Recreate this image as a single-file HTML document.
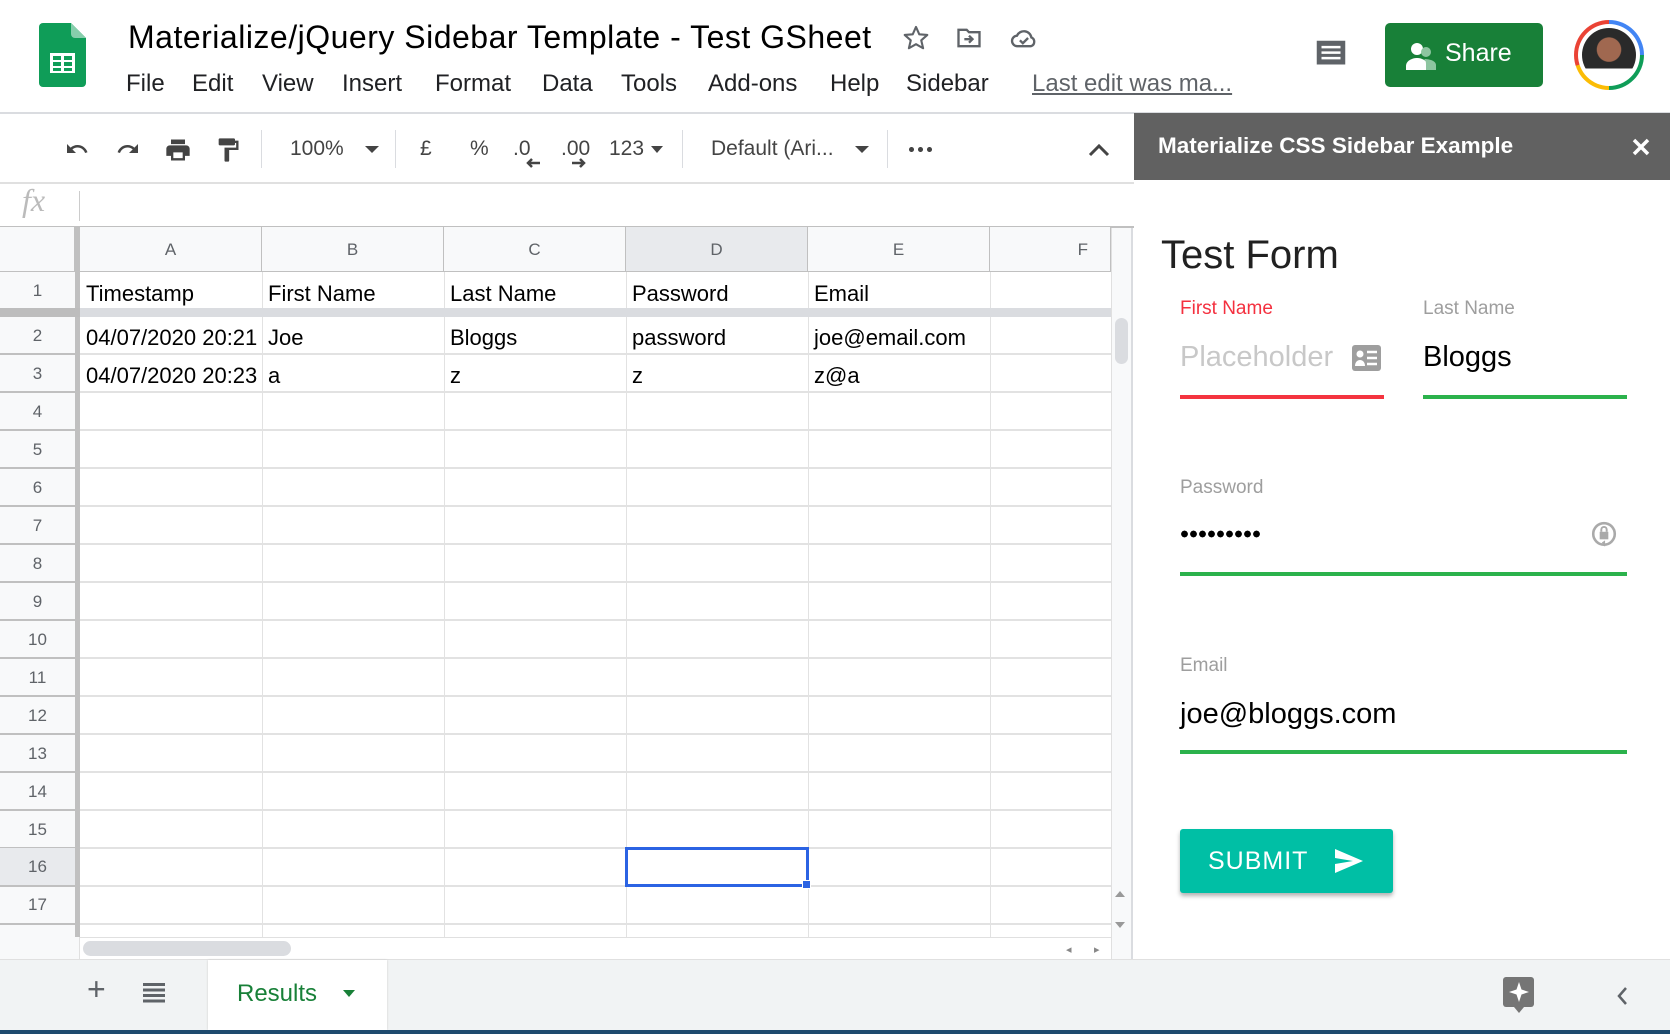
<!DOCTYPE html>
<html><head><meta charset="utf-8"><style>
*{margin:0;padding:0;box-sizing:border-box}
body{width:1670px;height:1034px;position:relative;overflow:hidden;background:#fff;font-family:"Liberation Sans",Arial,sans-serif;color:#202124}
.a{position:absolute;white-space:nowrap}
.menu{top:70px;font-size:24px;color:#202124}
.tb{top:137px;font-size:21px;color:#444}
.sep{position:absolute;top:130px;width:1px;height:38px;background:#dadce0}
.ch{position:absolute;top:227px;height:45px;border-right:1px solid #c0c0c0;border-bottom:1px solid #c0c0c0;background:#f8f9fa;text-align:center;line-height:46px;font-size:17px;color:#5f6368}
.rh{position:absolute;left:0;width:75px;height:38px;text-align:center;line-height:38px;font-size:17px;color:#5f6368}
.c{position:absolute;font-size:22px;color:#000;line-height:38px}
.lbl{position:absolute;font-size:19px;color:#9e9e9e}
</style></head><body>

<svg class="a" style="left:39px;top:23px" width="47" height="64" viewBox="0 0 47 64"><path d="M4 0h28l15 15v45a4 4 0 0 1-4 4H4a4 4 0 0 1-4-4V4a4 4 0 0 1 4-4z" fill="#0f9d58"/><path d="M32 0l15 15H36a4 4 0 0 1-4-4z" fill="#87ceac"/><rect x="11" y="30" width="25" height="20" fill="#fff"/><g fill="#0f9d58"><rect x="14" y="33" width="8" height="4"/><rect x="25" y="33" width="8" height="4"/><rect x="14" y="39" width="8" height="4"/><rect x="25" y="39" width="8" height="4"/><rect x="14" y="45" width="8" height="3"/><rect x="25" y="45" width="8" height="3"/></g></svg>
<div class="a" style="left:128px;top:19px;font-size:32px;letter-spacing:0.5px;color:#000">Materialize/jQuery Sidebar Template - Test GSheet</div>
<svg class="a" style="left:902px;top:24px" width="28" height="28" viewBox="0 0 24 24"><path d="M12 2.5l2.8 6.3 6.9.6-5.2 4.6 1.6 6.8L12 17.3l-6.1 3.5 1.6-6.8-5.2-4.6 6.9-.6z" fill="none" stroke="#5f6368" stroke-width="1.8" stroke-linejoin="round"/></svg>
<svg class="a" style="left:955px;top:24px" width="28" height="28" viewBox="0 0 24 24"><path d="M3 5h7l2 2h9v12H3z" fill="none" stroke="#5f6368" stroke-width="2"/><path d="M8 13h6M12 10l3 3-3 3" fill="none" stroke="#5f6368" stroke-width="2"/></svg>
<svg class="a" style="left:1009px;top:24px" width="30" height="28" viewBox="0 0 24 24"><path d="M6.5 19a4.5 4.5 0 0 1-.5-9 6.5 6.5 0 0 1 12.3 1.5A4 4 0 0 1 18 19z" fill="none" stroke="#5f6368" stroke-width="2"/><path d="M8.5 14l2.5 2.5 4.5-4.5" fill="none" stroke="#5f6368" stroke-width="2"/></svg>
<div class="a menu" style="left:126px">File</div>
<div class="a menu" style="left:192px">Edit</div>
<div class="a menu" style="left:262px">View</div>
<div class="a menu" style="left:342px">Insert</div>
<div class="a menu" style="left:435px">Format</div>
<div class="a menu" style="left:542px">Data</div>
<div class="a menu" style="left:621px">Tools</div>
<div class="a menu" style="left:708px">Add-ons</div>
<div class="a menu" style="left:830px">Help</div>
<div class="a menu" style="left:906px">Sidebar</div>
<div class="a menu" style="left:1032px;color:#5f6368;text-decoration:underline">Last edit was ma...</div>
<svg class="a" style="left:1312px;top:36px" width="38" height="38" viewBox="0 0 24 24"><path d="M3 3h18v15l3 3-3-3H3z" fill="#5f6368"/><path d="M6 7h12M6 10.5h12M6 14h12" stroke="#fff" stroke-width="1.6"/></svg>
<div class="a" style="left:1385px;top:23px;width:158px;height:64px;background:#188038;border-radius:5px"></div>
<svg class="a" style="left:1406px;top:42px" width="32" height="28" viewBox="0 0 32 28"><circle cx="11" cy="7" r="6" fill="#fff"/><path d="M0 28v-4c0-5 6-8 11-8s11 3 11 8v4z" fill="#fff"/><circle cx="20" cy="10" r="5" fill="#8dc5a0"/><path d="M20 28v-6c0-3-1-4-2-5 6 0 12 2 12 6v5z" fill="#8dc5a0"/></svg>
<div class="a" style="left:1445px;top:39px;font-size:25px;color:#fff">Share</div>
<div class="a" style="left:1574px;top:20px;width:70px;height:70px;border-radius:50%;background:conic-gradient(#4285f4 0 25%,#0f9d58 25% 50%,#fbbc05 50% 70%,#ea4335 70% 100%)"></div>
<div class="a" style="left:1578px;top:24px;width:62px;height:62px;border-radius:50%;background:#fff"></div>
<div class="a" style="left:1582px;top:28px;width:54px;height:54px;border-radius:50%;background:radial-gradient(circle at 50% 40%,#a06850 0 28%,#2a2a2a 30% 100%);clip-path:inset(0 0 25% 0)"></div>
<div class="a" style="left:0;top:112px;width:1670px;height:2px;background:#dadce0"></div>

<svg class="a" style="left:62px;top:137px" width="30" height="24" viewBox="0 0 24 24"><path d="M12.5 8c-2.6 0-5 1-6.9 2.6L2 7v9h9l-3.6-3.6c1.4-1.2 3.2-1.9 5.1-1.9 3.5 0 6.5 2.3 7.6 5.5l2.4-.8C21 11 17.1 8 12.5 8z" fill="#444"/></svg>
<svg class="a" style="left:113px;top:137px" width="30" height="24" viewBox="0 0 24 24"><path d="M18.4 10.6C16.6 9 14.2 8 11.5 8 6.9 8 3 11 1.6 15.2l2.4.8c1.1-3.2 4.1-5.5 7.6-5.5 2 0 3.7.7 5.1 1.9L13 16h9V7z" fill="#444"/></svg>
<svg class="a" style="left:163px;top:136px" width="30" height="28" viewBox="0 0 24 24"><path d="M19 8H5c-1.700 0-3 1.3-3 3v6h4v4h12v-4h4v-6c0-1.7-1.3-3-3-3zm-3 11H8v-5h8zM18 3H6v4h12z" fill="#444"/></svg>
<svg class="a" style="left:214px;top:135px" width="28" height="30" viewBox="0 0 24 24"><path d="M18 4V3c0-.6-.4-1-1-1H5c-.6 0-1 .4-1 1v4c0 .6.4 1 1 1h12c.6 0 1-.4 1-1V6h1v4H9v11c0 .6.4 1 1 1h2c.6 0 1-.4 1-1v-9h8V4z" fill="#444"/></svg>
<div class="sep" style="left:261px"></div>
<div class="a tb" style="left:290px">100%</div>
<div class="a" style="left:365px;top:146px;border:7px solid transparent;border-top:7px solid #444;border-bottom:0"></div>
<div class="sep" style="left:395px"></div>
<div class="a tb" style="left:420px">£</div>
<div class="a tb" style="left:470px">%</div>
<div class="a tb" style="left:513px">.0</div>
<svg class="a" style="left:525px;top:158px" width="16" height="10" viewBox="0 0 16 10"><path d="M15 5H3M7 1L3 5l4 4" fill="none" stroke="#444" stroke-width="2.5"/></svg>
<div class="a tb" style="left:561px">.00</div>
<svg class="a" style="left:571px;top:158px" width="16" height="10" viewBox="0 0 16 10"><path d="M1 5h12M9 1l4 4-4 4" fill="none" stroke="#444" stroke-width="2.5"/></svg>
<div class="a tb" style="left:609px">123</div>
<div class="a" style="left:651px;top:146px;border:6px solid transparent;border-top:7px solid #444;border-bottom:0"></div>
<div class="sep" style="left:682px"></div>
<div class="a tb" style="left:711px">Default (Ari...</div>
<div class="a" style="left:855px;top:146px;border:7px solid transparent;border-top:7px solid #444;border-bottom:0"></div>
<div class="sep" style="left:887px"></div>
<div class="a" style="left:907px;top:147px;width:26px;height:5px;background:radial-gradient(circle,#444 2.4px,transparent 2.6px) 0 0/9px 5px repeat-x"></div>
<svg class="a" style="left:1087px;top:140px" width="24" height="18" viewBox="0 0 24 18"><path d="M3 15l9-9 9 9" fill="none" stroke="#444" stroke-width="3"/></svg>
<div class="a" style="left:0;top:182px;width:1134px;height:2px;background:#e0e0e0"></div>
<div class="a" style="left:22px;top:182px;font-family:'Liberation Serif',serif;font-style:italic;font-size:32px;color:#bbb">fx</div>
<div class="a" style="left:79px;top:191px;width:1px;height:30px;background:#ccc"></div>
<div class="a" style="left:0;top:226px;width:1134px;height:2px;background:#c0c0c0"></div>

<div class="a" style="left:0;top:317px;width:1111px;height:620px;background:repeating-linear-gradient(to bottom,transparent 0 36px,#e2e2e2 36px 38px);"></div>
<div class="a" style="left:0;top:228px;width:80px;height:709px;background:#f8f9fa"></div>
<div class="a" style="left:0;top:317px;width:80px;height:620px;background:repeating-linear-gradient(to bottom,transparent 0 36px,#c0c0c0 36px 38px)"></div>
<div class="a" style="left:0;top:848px;width:76px;height:37px;background:#e8eaed"></div>
<div class="a" style="left:75px;top:228px;width:5px;height:709px;background:#c0c0c0"></div>
<div class="a" style="left:262px;top:272px;width:1px;height:665px;background:#e2e2e2"></div>
<div class="a" style="left:444px;top:272px;width:1px;height:665px;background:#e2e2e2"></div>
<div class="a" style="left:626px;top:272px;width:1px;height:665px;background:#e2e2e2"></div>
<div class="a" style="left:808px;top:272px;width:1px;height:665px;background:#e2e2e2"></div>
<div class="a" style="left:990px;top:272px;width:1px;height:665px;background:#e2e2e2"></div>
<div class="a" style="left:0;top:308px;width:1111px;height:9px;background:#dadce0"></div>
<div class="a" style="left:0;top:308px;width:80px;height:9px;background:#bdbdbd"></div>
<div class="ch" style="left:0;width:75px"></div>
<div class="ch" style="left:80px;width:182px">A</div>
<div class="ch" style="left:262px;width:182px">B</div>
<div class="ch" style="left:444px;width:182px">C</div>
<div class="ch" style="left:626px;width:182px;background:#e8eaed">D</div>
<div class="ch" style="left:808px;width:182px">E</div>
<div class="ch" style="left:990px;width:121px;text-align:right;padding-right:22px">F</div>
<div class="rh" style="top:272px">1</div>
<div class="rh" style="top:317px">2</div><div class="rh" style="top:355px">3</div><div class="rh" style="top:393px">4</div><div class="rh" style="top:431px">5</div><div class="rh" style="top:469px">6</div><div class="rh" style="top:507px">7</div><div class="rh" style="top:545px">8</div><div class="rh" style="top:583px">9</div><div class="rh" style="top:621px">10</div><div class="rh" style="top:659px">11</div><div class="rh" style="top:697px">12</div><div class="rh" style="top:735px">13</div><div class="rh" style="top:773px">14</div><div class="rh" style="top:811px">15</div><div class="rh" style="top:848px">16</div><div class="rh" style="top:886px">17</div>
<div class="c" style="left:86px;top:275px">Timestamp</div>
<div class="c" style="left:268px;top:275px">First Name</div>
<div class="c" style="left:450px;top:275px">Last Name</div>
<div class="c" style="left:632px;top:275px">Password</div>
<div class="c" style="left:814px;top:275px">Email</div>
<div class="c" style="left:86px;top:319px;width:176px;overflow:hidden">04/07/2020 20:21</div>
<div class="c" style="left:268px;top:319px">Joe</div>
<div class="c" style="left:450px;top:319px">Bloggs</div>
<div class="c" style="left:632px;top:319px">password</div>
<div class="c" style="left:814px;top:319px">joe@email.com</div>
<div class="c" style="left:86px;top:357px;width:176px;overflow:hidden">04/07/2020 20:23</div>
<div class="c" style="left:268px;top:357px">a</div>
<div class="c" style="left:450px;top:357px">z</div>
<div class="c" style="left:632px;top:357px">z</div>
<div class="c" style="left:814px;top:357px">z@a</div>
<div class="a" style="left:625px;top:847px;width:184px;height:40px;border:3px solid #2b63e3"></div>
<div class="a" style="left:802px;top:880px;width:9px;height:9px;background:#2b63e3;border:1px solid #fff"></div>
<div class="a" style="left:1111px;top:228px;width:22px;height:731px;background:#f8f9fa;border-left:1px solid #e0e0e0;border-right:2px solid #dadce0"></div>
<div class="a" style="left:1115px;top:318px;width:13px;height:46px;background:#dadce0;border-radius:7px"></div>
<div class="a" style="left:1115px;top:891px;border:5px solid transparent;border-bottom:6px solid #999;border-top:0"></div>
<div class="a" style="left:1115px;top:922px;border:5px solid transparent;border-top:6px solid #999;border-bottom:0"></div>
<div class="a" style="left:0;top:937px;width:1111px;height:22px;background:#fff;border-top:1px solid #e0e0e0"></div>
<div class="a" style="left:0;top:937px;width:80px;height:22px;background:#f8f9fa;border-right:1px solid #e0e0e0"></div>
<div class="a" style="left:83px;top:941px;width:208px;height:15px;background:#dadce0;border-radius:8px"></div>
<div class="a" style="left:1066px;top:943px;font-size:11px;color:#888">◂</div>
<div class="a" style="left:1094px;top:943px;font-size:11px;color:#888">▸</div>
<div class="a" style="left:0;top:959px;width:1670px;height:71px;background:#f1f3f4;border-top:1px solid #e0e0e0"></div>
<div class="a" style="left:87px;top:971px;font-size:32px;color:#5f6368">+</div>
<div class="a" style="left:143px;top:983px;width:22px;height:20px;background:repeating-linear-gradient(#5f6368 0 3px,transparent 3px 5.5px)"></div>
<div class="a" style="left:208px;top:960px;width:179px;height:70px;background:#fff;box-shadow:0 0 2px #ccc"></div>
<div class="a" style="left:237px;top:980px;font-size:24px;color:#188038">Results</div>
<div class="a" style="left:343px;top:990px;border:6px solid transparent;border-top:7px solid #188038;border-bottom:0"></div>
<svg class="a" style="left:1502px;top:976px" width="34" height="38" viewBox="0 0 34 38"><rect x="1" y="1" width="31" height="30" rx="3" fill="#757575"/><path d="M12 31h10l-5 6z" fill="#757575"/><path d="M17 6l2.5 7.5L27 16l-7.5 2.5L17 26l-2.5-7.5L7 16l7.5-2.5z" fill="#fff"/></svg>
<svg class="a" style="left:1614px;top:985px" width="16" height="22" viewBox="0 0 16 22"><path d="M12 3L5 11l7 8" fill="none" stroke="#5f6368" stroke-width="2.5"/></svg>
<div class="a" style="left:0;top:1030px;width:1670px;height:4px;background:#1e4a6e"></div>

<div class="a" style="left:1134px;top:113px;width:536px;height:67px;background:#616161"></div>
<div class="a" style="left:1158px;top:133px;font-size:22.5px;font-weight:bold;color:#fff">Materialize CSS Sidebar Example</div>
<svg class="a" style="left:1631px;top:137px" width="20" height="20" viewBox="0 0 20 20"><path d="M3 3l14 14M17 3L3 17" stroke="#fff" stroke-width="3.5"/></svg>
<div class="a" style="left:1161px;top:233px;font-size:40px;color:#212121">Test Form</div>
<div class="lbl" style="left:1180px;top:298px;color:#f4303f">First Name</div>
<div class="lbl" style="left:1423px;top:298px">Last Name</div>
<div class="a" style="left:1180px;top:341px;font-size:29px;color:#c8c8c8">Placeholder</div>
<svg class="a" style="left:1352px;top:345px" width="29" height="26" viewBox="0 0 29 26"><rect x="0" y="0" width="29" height="26" rx="3" fill="#9e9e9e"/><circle cx="8" cy="9" r="3.5" fill="#fff"/><path d="M3 21c0-4 2.5-6 5-6s5 2 5 6z" fill="#fff"/><path d="M15 7h10M15 13h10M15 19h10" stroke="#fff" stroke-width="2.5"/></svg>
<div class="a" style="left:1423px;top:341px;font-size:29px;color:#000">Bloggs</div>
<div class="a" style="left:1180px;top:395px;width:204px;height:4px;background:#f4343f"></div>
<div class="a" style="left:1423px;top:395px;width:204px;height:4px;background:#2bb24c"></div>
<div class="lbl" style="left:1180px;top:477px">Password</div>
<div class="a" style="left:1180px;top:530px;width:80px;height:8px;background:radial-gradient(circle,#000 3.2px,transparent 3.5px) 0 0/9px 8px repeat-x"></div>
<svg class="a" style="left:1591px;top:521px" width="26" height="28" viewBox="0 0 24 26"><circle cx="12" cy="12" r="10" fill="none" stroke="#aaa" stroke-width="2.4"/><rect x="8" y="10" width="8" height="7" fill="#aaa"/><path d="M9.5 10V8a2.5 2.5 0 0 1 5 0v2" fill="none" stroke="#aaa" stroke-width="1.8"/><path d="M10 20l3 4 0-6z" fill="#aaa"/></svg>
<div class="a" style="left:1180px;top:572px;width:447px;height:4px;background:#2bb24c"></div>
<div class="lbl" style="left:1180px;top:655px">Email</div>
<div class="a" style="left:1180px;top:698px;font-size:29px;color:#000">joe@bloggs.com</div>
<div class="a" style="left:1180px;top:750px;width:447px;height:4px;background:#2bb24c"></div>
<div class="a" style="left:1180px;top:829px;width:213px;height:64px;background:#00bfa5;border-radius:3px;box-shadow:0 3px 4px rgba(0,0,0,.3)"></div>
<div class="a" style="left:1208px;top:847px;font-size:25px;color:#fff;letter-spacing:1px">SUBMIT</div>
<svg class="a" style="left:1334px;top:848px" width="30" height="26" viewBox="0 0 30 26"><path d="M1 1l28 12L1 25l0-9 18-3-18-3z" fill="#fff"/></svg>
</body></html>
